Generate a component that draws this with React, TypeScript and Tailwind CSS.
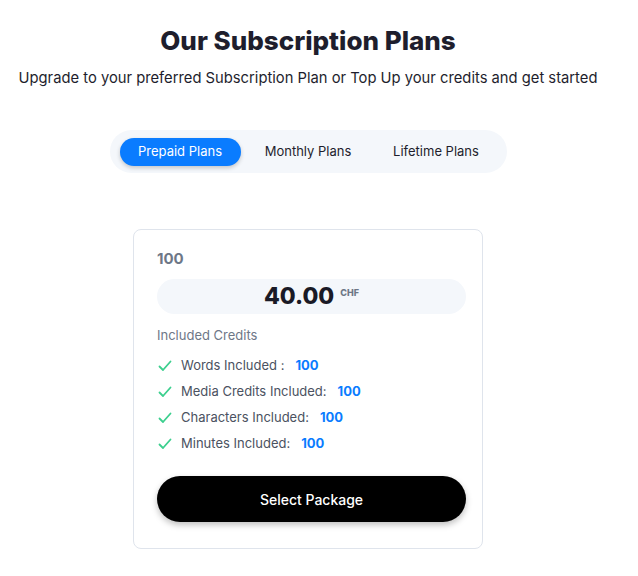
import React from 'react';

const features = [
    { label: 'Words Included :', value: '100' },
    { label: 'Media Credits Included:', value: '100' },
    { label: 'Characters Included:', value: '100' },
    { label: 'Minutes Included:', value: '100' },
];

const CheckIcon: React.FC = () => (
    <svg width="14" height="12" viewBox="0 0 14 12" fill="none" className="shrink-0">
        <path d="M1.5 6.5 L5 10 L12.5 1.5" stroke="#3ccf8e" strokeWidth="1.8" strokeLinecap="round" strokeLinejoin="round" />
    </svg>
);

const Tabs: React.FC = () => {
    const tabs = ['Prepaid Plans', 'Monthly Plans', 'Lifetime Plans'];
    return (
        <div className="mt-[41px] flex h-[43px] w-[397px] items-center gap-[7px] rounded-full bg-[#f4f7fb] px-[10px]">
            {tabs.map((t, i) => (
                <button
                    key={t}
                    className={
                        i === 0
                            ? 'h-[28px] w-[121px] rounded-full bg-[#0a7cff] text-[13px] text-white shadow-[0_2px_4px_rgba(0,0,0,0.2)]'
                            : 'h-[28px] w-[121px] rounded-full text-[13px] text-[#1e1e2d]'
                    }
                >
                    {t}
                </button>
            ))}
        </div>
    );
};

const PlanCard: React.FC = () => {
    return (
        <div className="mt-[56px] w-[350px] rounded-[8px] border border-[#dfe4ec] bg-white pl-[23px] pr-[16px] pt-[18px] pb-[26px]">
            <div className="text-[15px] font-bold leading-[22px] text-[#6e7787]">100</div>
            <div className="mt-[9px] flex h-[35px] items-center justify-center rounded-full bg-[#f4f7fb]">
                <span className="text-[23px] font-extrabold leading-none text-[#1a1a26]">40.00</span>
                <span className="ml-[6px] -mt-[8px] text-[9px] font-extrabold text-[#6e7787]">CHF</span>
            </div>
            <div className="mt-[12px] text-[13px] leading-[18px] text-[#6e7787]">Included Credits</div>
            <div className="mt-[9px] flex flex-col">
                {features.map((f) => (
                    <div key={f.label} className="flex h-[26px] items-center pl-[1px]">
                        <CheckIcon />
                        <span className="ml-[9px] text-[13px] text-[#4b5261]">{f.label}</span>
                        <span className="ml-[11px] text-[13px] font-bold text-[#0a7cff]">{f.value}</span>
                    </div>
                ))}
            </div>
            <button className="mt-[19px] h-[46px] w-full rounded-full bg-black text-[14px] font-medium text-white shadow-[0_3px_6px_rgba(0,0,0,0.25)]">
                Select Package
            </button>
        </div>
    );
};

const App: React.FC = () => {
    return (
        <div className="min-h-screen bg-white font-['Inter',sans-serif]">
            <div className="flex w-[616px] flex-col items-center pt-[24px]">
                <h1 className="text-[26px] font-extrabold leading-[34px] text-[#1e1e2d]">Our Subscription Plans</h1>
                <p className="mt-[9px] text-[14.75px] leading-[22px] text-[#1e1e2d]">
                    Upgrade to your preferred Subscription Plan or Top Up your credits and get started
                </p>
                <Tabs />
                <PlanCard />
            </div>
        </div>
    );
};

export default App;
